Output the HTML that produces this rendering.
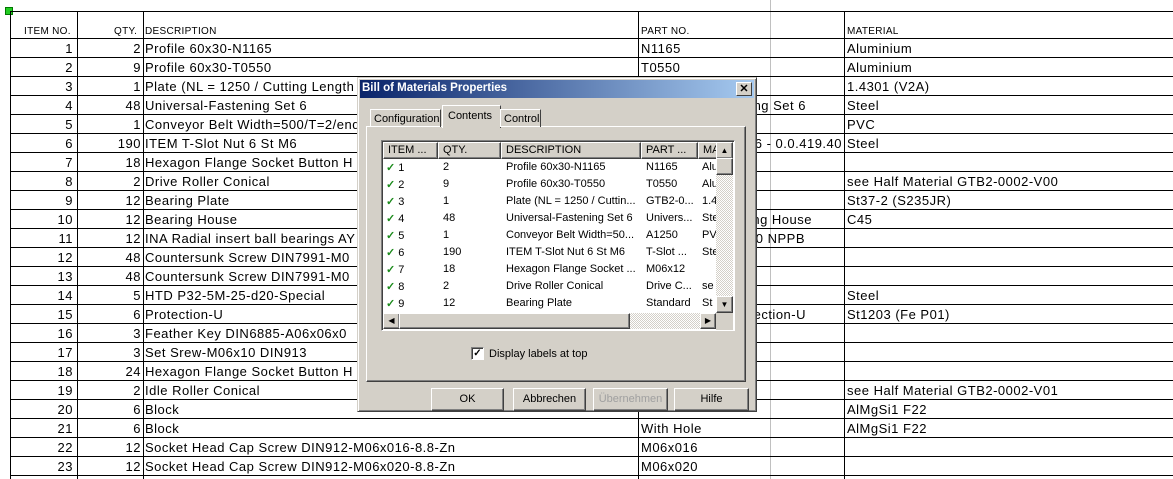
<!DOCTYPE html>
<html><head><meta charset="utf-8"><style>
body{margin:0;width:1173px;height:479px;background:#fff;position:relative;overflow:hidden;font-family:"Liberation Sans",Arial,sans-serif}
.a{position:absolute}
.hl{position:absolute;height:1px;background:#000;left:10px;width:1163px}
.vl{position:absolute;width:1px;background:#000;top:11px;height:468px}
.t{position:absolute;font-size:13px;letter-spacing:0.5px;white-space:nowrap;line-height:19px;color:#000}
.h{position:absolute;font-size:10px;letter-spacing:0.3px;white-space:nowrap;color:#000}
.r{text-align:right}
.dlg{position:absolute;left:357px;top:77px;width:398px;height:333px;background:#d4d0c8;border-top:1px solid #d4d0c8;border-left:1px solid #d4d0c8;border-right:1px solid #404040;border-bottom:1px solid #404040;box-shadow:inset 1px 1px #fff,inset -1px -1px #808080}
.d{font-size:11px;color:#000;white-space:nowrap;position:absolute}
.btn{position:absolute;top:310px;height:21px;background:#d4d0c8;border:1px solid;border-color:#fff #404040 #404040 #fff;box-shadow:inset -1px -1px #808080;font-size:11px;text-align:center;line-height:21px}
.ck{color:#1a8a1a;font-weight:bold;font-size:11px}
</style></head><body>
<div class="a" style="left:5px;top:7px;width:6px;height:6px;background:#2c2;border:1px solid #070"></div>
<div class="a" style="left:770px;top:0;width:1px;height:479px;background:#c0c0c0"></div>
<div class="hl" style="top:11px"></div>
<div class="vl" style="left:10px"></div><div class="vl" style="left:77px"></div><div class="vl" style="left:143px"></div><div class="vl" style="left:638px"></div><div class="vl" style="left:844px"></div>
<div class="h" style="left:24px;top:26px">ITEM NO.</div>
<div class="h" style="left:114px;top:26px">QTY.</div>
<div class="h" style="left:145px;top:26px">DESCRIPTION</div>
<div class="h" style="left:641px;top:26px">PART NO.</div>
<div class="h" style="left:847px;top:26px">MATERIAL</div>
<div id="rows"></div>
<script>
var d=[["2","Profile 60x30-N1165","N1165","Aluminium"],["9","Profile 60x30-T0550","T0550","Aluminium"],["1","Plate (NL = 1250 / Cutting Length","","1.4301 (V2A)"],["48","Universal-Fastening Set 6","","Steel"],["1","Conveyor Belt Width=500/T=2/end","","PVC"],["190","ITEM T-Slot Nut 6 St M6","","Steel"],["18","Hexagon Flange Socket Button H","",""],["2","Drive Roller Conical","","see Half Material GTB2-0002-V00"],["12","Bearing Plate","","St37-2 (S235JR)"],["12","Bearing House","","C45"],["12","INA Radial insert ball bearings AY","",""],["48","Countersunk Screw DIN7991-M0","",""],["48","Countersunk Screw DIN7991-M0","",""],["5","HTD P32-5M-25-d20-Special","","Steel"],["6","Protection-U","","St1203 (Fe P01)"],["3","Feather Key DIN6885-A06x06x0","",""],["3","Set Srew-M06x10 DIN913","",""],["24","Hexagon Flange Socket Button H","",""],["2","Idle Roller Conical","","see Half Material GTB2-0002-V01"],["6","Block","","AlMgSi1 F22"],["6","Block","With Hole","AlMgSi1 F22"],["12","Socket Head Cap Screw DIN912-M06x016-8.8-Zn","M06x016",""],["12","Socket Head Cap Screw DIN912-M06x020-8.8-Zn","M06x020",""]];
var rp={3:["Universal-Fastening Set 6",806],5:["T-Slot Nut 6 - 0.0.419.40",842],9:["Standard Bearing House",812],10:["AY20 NPPB",805],14:["Protection-U",806]};
var h="";
for(var i=0;i<d.length;i++){var y=38+19*i;var ty=y+1;
h+='<div class="hl" style="top:'+y+'px"></div>';
h+='<div class="t r" style="left:10px;width:63px;top:'+ty+'px">'+(i+1)+'</div>';
h+='<div class="t r" style="left:77px;width:64px;top:'+ty+'px">'+d[i][0]+'</div>';
h+='<div class="t" style="left:145px;top:'+ty+'px;width:490px;overflow:hidden">'+d[i][1]+'</div>';
h+='<div class="t" style="left:641px;top:'+ty+'px;width:201px;overflow:hidden">'+d[i][2]+'</div>';
if(rp[i])h+='<div class="t r" style="left:'+(rp[i][1]-200)+'px;width:200px;top:'+ty+'px">'+rp[i][0]+'</div>';
h+='<div class="t" style="left:847px;top:'+ty+'px">'+d[i][3]+'</div>';}
h+='<div class="hl" style="top:475px"></div>';
document.getElementById('rows').innerHTML=h;
</script>
<div class="dlg">
 <div class="a" style="left:2px;top:2px;width:394px;height:18px;background:linear-gradient(90deg,#0a246a,#a6caf0)"></div>
 <div class="d" style="left:4px;top:4px;color:#fff;font-weight:bold;font-size:11.5px">Bill of Materials Properties</div>
 <div class="a" style="left:378px;top:4px;width:14px;height:12px;background:#d4d0c8;border:1px solid;border-color:#fff #404040 #404040 #fff;font-size:11px;line-height:12px;text-align:center;font-weight:bold">✕</div>
 <div class="a" style="left:8px;top:48px;width:378px;height:254px;border:1px solid;border-color:#fff #404040 #404040 #fff;box-shadow:inset -1px -1px #808080"></div>
 <div class="a" style="left:12px;top:31px;width:69px;height:17px;border:1px solid;border-bottom:none;border-color:#fff #404040 #fff #fff"></div>
 <div class="d" style="left:16px;top:35px">Configuration</div>
 <div class="a" style="left:84px;top:27px;width:57px;height:22px;background:#d4d0c8;border:1px solid;border-bottom:none;border-color:#fff #404040 #fff #fff"></div>
 <div class="d" style="left:90px;top:32px">Contents</div>
 <div class="a" style="left:142px;top:31px;width:39px;height:17px;border:1px solid;border-bottom:none;border-color:#fff #404040 #fff #fff"></div>
 <div class="d" style="left:146px;top:35px">Control</div>
 <div class="a" style="left:23px;top:62px;width:352px;height:189px;background:#fff;border:1px solid;border-color:#808080 #fff #fff #808080;box-shadow:inset 1px 1px #404040;overflow:hidden">
  <div id="lv"></div>
 </div>
 <div class="a" style="left:113px;top:269px;width:11px;height:11px;background:#fff;border:1px solid;border-color:#808080 #fff #fff #808080;box-shadow:inset 1px 1px #404040;font-size:10px;line-height:11px;text-align:center;font-weight:bold">✓</div>
 <div class="d" style="left:131px;top:270px">Display labels at top</div>
 <div class="btn" style="left:73px;width:71px">OK</div>
 <div class="btn" style="left:155px;width:71px">Abbrechen</div>
 <div class="btn" style="left:235px;width:73px;color:#a0a0a0">Übernehmen</div>
 <div class="btn" style="left:316px;width:73px">Hilfe</div>
</div>
<script>
var L=[["1","2","Profile 60x30-N1165","N1165","Alu"],["2","9","Profile 60x30-T0550","T0550","Alu"],["3","1","Plate (NL = 1250 / Cuttin...","GTB2-0...","1.4"],["4","48","Universal-Fastening Set 6","Univers...","Ste"],["5","1","Conveyor Belt Width=50...","A1250","PV"],["6","190","ITEM T-Slot Nut 6 St M6","T-Slot ...","Ste"],["7","18","Hexagon Flange Socket ...","M06x12",""],["8","2","Drive Roller Conical","Drive C...","se"],["9","12","Bearing Plate","Standard","St"]];
var g="";
var cols=[[0,55,"ITEM ..."],[55,63,"QTY."],[118,140,"DESCRIPTION"],[258,57,"PART ..."],[315,20,"MA"]];
cols.forEach(function(c){g+='<div class="a" style="left:'+(c[0]+1)+'px;top:1px;width:'+(c[1]-2)+'px;height:15px;background:#d4d0c8;border:1px solid;border-color:#fff #404040 #404040 #fff;box-shadow:inset -1px -1px #808080;overflow:hidden"><div class="d" style="left:4px;top:1px">'+c[2]+'</div></div>';});
for(var i=0;i<L.length;i++){var y=20+17*i;
g+='<div class="d" style="left:4px;top:'+y+'px"><span class="ck">✓</span> '+L[i][0]+'</div>';
g+='<div class="d" style="left:61px;top:'+y+'px">'+L[i][1]+'</div>';
g+='<div class="d" style="left:124px;top:'+y+'px">'+L[i][2]+'</div>';
g+='<div class="d" style="left:264px;top:'+y+'px">'+L[i][3]+'</div>';
g+='<div class="d" style="left:320px;top:'+y+'px;width:14px;overflow:hidden">'+L[i][4]+'</div>';}
g+='<div class="a" style="left:334px;top:1px;width:17px;height:171px;background:repeating-conic-gradient(#fff 0 25%,#d4d0c8 0 50%) 0 0/2px 2px"></div>';
var sb='background:#d4d0c8;border:1px solid;border-color:#fff #404040 #404040 #fff;box-shadow:inset -1px -1px #808080;font-size:8px;text-align:center;';
g+='<div class="a" style="left:334px;top:1px;width:15px;height:15px;'+sb+'line-height:15px">▲</div>';
g+='<div class="a" style="left:334px;top:17px;width:15px;height:15px;'+sb+'"></div>';
g+='<div class="a" style="left:334px;top:155px;width:15px;height:15px;'+sb+'line-height:15px">▼</div>';
g+='<div class="a" style="left:1px;top:172px;width:333px;height:16px;background:repeating-conic-gradient(#fff 0 25%,#d4d0c8 0 50%) 0 0/2px 2px"></div>';
g+='<div class="a" style="left:1px;top:172px;width:15px;height:14px;'+sb+'line-height:14px">◀</div>';
g+='<div class="a" style="left:17px;top:172px;width:229px;height:14px;'+sb+'"></div>';
g+='<div class="a" style="left:318px;top:172px;width:14px;height:14px;'+sb+'line-height:14px">▶</div>';
g+='<div class="a" style="left:334px;top:172px;width:17px;height:17px;background:#d4d0c8"></div>';
document.getElementById('lv').innerHTML=g;
</script>
</body></html>
